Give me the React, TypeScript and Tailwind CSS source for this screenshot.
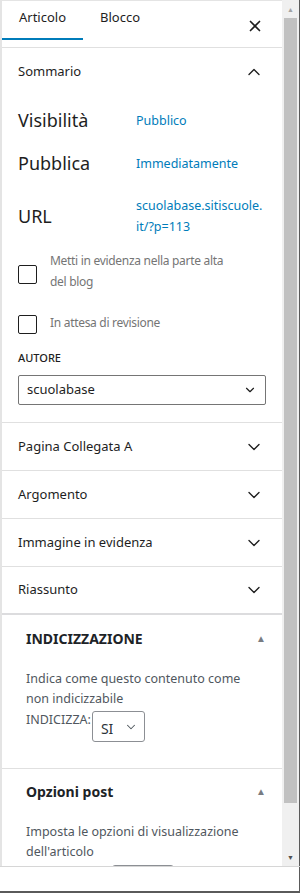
import { X, ChevronUp, ChevronDown } from "lucide-react";

const font = { fontFamily: '"Noto Sans", "Open Sans", Arial, sans-serif' };

const Row = ({ label, value, tall }: { label: string; value: string[]; tall?: boolean }) => (
  <div className={`flex items-center ${tall ? "h-[62px]" : "h-[43px]"}`}>
    <div className="w-[118px] text-[18px] text-[#1e1e1e]">{label}</div>
    <div className="text-[12.5px] leading-[21px] text-[#007cba]">
      {value.map((v) => (
        <div key={v}>{v}</div>
      ))}
    </div>
  </div>
);

const Collapsed = ({ title }: { title: string }) => (
  <div className="flex h-[48px] items-center justify-between border-b border-[#e0e0e0] pl-[16px] pr-[16px]">
    <span className="text-[13px] text-[#1e1e1e]">{title}</span>
    <ChevronDown size={20} strokeWidth={1.6} className="text-[#1e1e1e] mr-[2px]" />
  </div>
);

const Tri = () => <span className="text-[10px] text-[#787c82] mr-[16px]">▲</span>;

export default function App() {
  return (
    <div className="w-[300px] h-[893px] bg-white flex flex-col overflow-hidden" style={font}>
      <div className="flex h-[867px] border-b border-[#d6d6d6]">
        {/* panel */}
        <div className="w-[282px] border-l-2 border-t border-[#e4e4e4] overflow-hidden">
          {/* header */}
          <div className="flex h-[47px] border-b border-[#e0e0e0]">
            <div className="h-[39px] px-[17px] pt-[7px] border-b-2 border-[#007cba] text-[13px] text-[#1e1e1e]">
              Articolo
            </div>
            <div className="h-[39px] px-[17px] pt-[7px] text-[13px] text-[#1e1e1e]">Blocco</div>
            <div className="ml-auto mr-[18px] mt-[16px]">
              <X size={18} strokeWidth={2.2} className="text-[#1e1e1e]" />
            </div>
          </div>

          {/* sommario */}
          <div className="border-b border-[#e0e0e0] pb-[17px]">
            <div className="flex h-[48px] items-center justify-between px-[16px]">
              <span className="text-[13px] text-[#1e1e1e]">Sommario</span>
              <ChevronUp size={20} strokeWidth={1.6} className="text-[#1e1e1e] mr-[2px]" />
            </div>
            <div className="px-[16px] pt-[3px]">
              <Row label="Visibilità" value={["Pubblico"]} />
              <Row label="Pubblica" value={["Immediatamente"]} />
              <Row label="URL" value={["scuolabase.sitiscuole.", "it/?p=113"]} tall />

              <div className="flex mt-[3px]">
                <div className="w-[19px] h-[19px] mt-[15px] border border-[#1e1e1e] rounded-[2px] shrink-0" />
                <div className="ml-[13px] text-[12px] tracking-[-0.3px] leading-[21px] text-[#757575]">
                  Metti in evidenza nella parte alta
                  <br />
                  del blog
                </div>
              </div>

              <div className="flex mt-[19px] items-center">
                <div className="w-[19px] h-[19px] mt-[4px] border border-[#1e1e1e] rounded-[2px] shrink-0" />
                <div className="ml-[13px] text-[12px] tracking-[-0.3px] leading-[21px] text-[#757575]">
                  In attesa di revisione
                </div>
              </div>

              <div className="mt-[16px] text-[11px] font-medium text-[#1e1e1e] leading-[16px]">AUTORE</div>
              <div className="mt-[9px] flex h-[30px] w-[248px] items-center justify-between rounded-[2px] border border-[#757575] pl-[8px] pr-[8px]">
                <span className="text-[13px] text-[#1e1e1e]">scuolabase</span>
                <ChevronDown size={14} strokeWidth={2} className="text-[#1e1e1e]" />
              </div>
            </div>
          </div>

          <Collapsed title="Pagina Collegata A" />
          <Collapsed title="Argomento" />
          <Collapsed title="Immagine in evidenza" />
          <div className="flex h-[48px] items-center justify-between border-b-2 border-[#dcdcde] px-[16px]">
            <span className="text-[13px] text-[#1e1e1e]">Riassunto</span>
            <ChevronDown size={20} strokeWidth={1.6} className="text-[#1e1e1e] mr-[2px]" />
          </div>

          {/* indicizzazione */}
          <div className="border-b border-[#e0e0e0] pb-[26px]">
            <div className="flex h-[46px] items-center justify-between pl-[24px]">
              <span className="text-[14px] font-bold text-[#1d2327]">INDICIZZAZIONE</span>
              <Tri />
            </div>
            <div className="pl-[24px] pr-[36px] pt-[8px]">
              <p className="text-[12.5px] leading-[19.5px] text-[#50575e]">
                Indica come questo contenuto come non indicizzabile
              </p>
              <div className="mt-[1px] flex items-start">
                <span className="text-[12.5px] leading-[19px] text-[#50575e] pt-[1px]">INDICIZZA:</span>
                <div className="ml-[1px] mt-[2px] flex h-[31px] w-[53px] items-center justify-between rounded-[3px] border border-[#8c8f94] pl-[8px] pr-[6px]">
                  <span className="text-[14px] text-[#2c3338] pt-[4px]">SI</span>
                  <ChevronDown size={14} strokeWidth={1.8} className="text-[#50575e]" />
                </div>
              </div>
            </div>
          </div>

          {/* opzioni post */}
          <div>
            <div className="flex h-[45px] items-center justify-between pl-[24px]">
              <span className="text-[14px] font-bold text-[#1d2327]">Opzioni post</span>
              <Tri />
            </div>
            <div className="pl-[24px] pr-[36px] pt-[8px]">
              <p className="text-[12.5px] leading-[19.5px] text-[#50575e]">
                Imposta le opzioni di visualizzazione dell'articolo
              </p>
              <div className="ml-[86px] mt-[4px] h-[20px] w-[62px] rounded-[3px] border border-[#8c8f94]" />
            </div>
          </div>
        </div>

        {/* scrollbar */}
        <div className="w-[17px] bg-[#f0f0f0] flex flex-col">
          <div className="h-[18px] flex items-center justify-center">
            <span className="text-[7px] text-[#a3a3a3] leading-none">▲</span>
          </div>
          <div className="ml-[2px] w-[13px] h-[785px] bg-[#c1c1c1]" />
          <div className="flex-1" />
          <div className="h-[18px] flex items-center justify-center">
            <span className="text-[7px] text-[#505050] leading-none">▼</span>
          </div>
        </div>
        <div className="w-[1px] bg-[#5a5a5a]" />
      </div>
      <div className="flex flex-1">
        <div className="flex-1" />
        <div className="w-[1px] bg-[#5a5a5a]" />
      </div>
      <div className="h-[2px] bg-[#5a5a5a]" />
    </div>
  );
}
